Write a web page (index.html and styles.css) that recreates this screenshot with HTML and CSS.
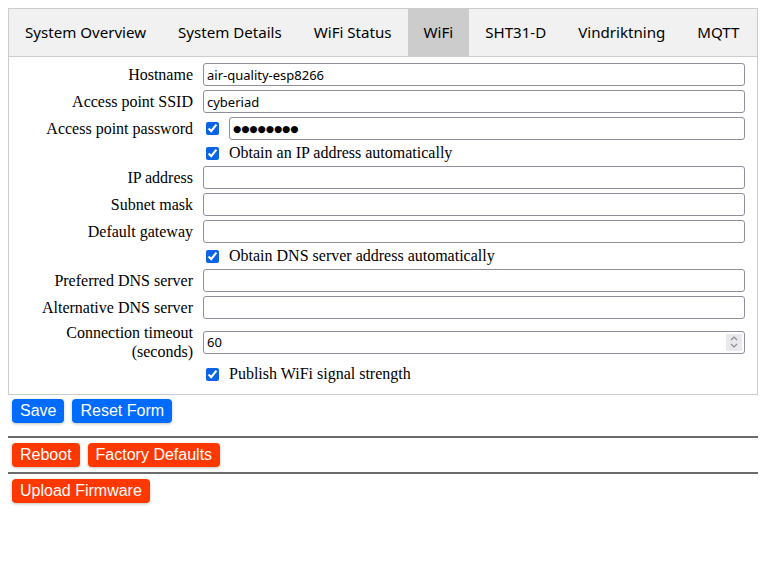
FILE: index.html
```html
<!DOCTYPE html>
<html>
<head>
<meta charset="utf-8">
<link rel="stylesheet" href="styles.css">
</head>
<body>
<div class="tab">
  <button class="tablink">System Overview</button>
  <button class="tablink">System Details</button>
  <button class="tablink">WiFi Status</button>
  <button class="tablink active">WiFi</button>
  <button class="tablink">SHT31-D</button>
  <button class="tablink">Vindriktning</button>
  <button class="tablink">MQTT</button>
</div>
<div class="tabcontent">
  <form class="grid">
    <label class="lbl">Hostname</label>
    <input class="txt" type="text" value="air-quality-esp8266">

    <label class="lbl">Access point SSID</label>
    <input class="txt" type="text" value="cyberiad">

    <label class="lbl">Access point password</label>
    <div class="pwrow">
      <input class="cb" type="checkbox" checked>
      <input class="txt pw" type="text" value="●●●●●●●●">
    </div>

    <span></span>
    <label class="cbrow"><input class="cb" type="checkbox" checked>Obtain an IP address automatically</label>

    <label class="lbl">IP address</label>
    <input class="txt" type="text">

    <label class="lbl">Subnet mask</label>
    <input class="txt" type="text">

    <label class="lbl">Default gateway</label>
    <input class="txt" type="text">

    <span></span>
    <label class="cbrow"><input class="cb" type="checkbox" checked>Obtain DNS server address automatically</label>

    <label class="lbl">Preferred DNS server</label>
    <input class="txt" type="text">

    <label class="lbl">Alternative DNS server</label>
    <input class="txt" type="text">

    <label class="lbl two">Connection timeout<br>(seconds)</label>
    <div class="numwrap">
      <input class="txt num" type="text" value="60">
      <span class="spin"><svg width="10" height="16" viewBox="0 0 10 16"><path d="M2 6 L5 3 L8 6" fill="none" stroke="#8a8a96" stroke-width="1.2"/><path d="M2 10 L5 13 L8 10" fill="none" stroke="#8a8a96" stroke-width="1.2"/></svg></span>
    </div>

    <span></span>
    <label class="cbrow"><input class="cb" type="checkbox" checked>Publish WiFi signal strength</label>
  </form>
</div>
<div class="btnrow first">
  <button class="btn blue">Save</button>
  <button class="btn blue">Reset Form</button>
</div>
<hr class="sep">
<div class="btnrow">
  <button class="btn red">Reboot</button>
  <button class="btn red">Factory Defaults</button>
</div>
<hr class="sep">
<div class="btnrow">
  <button class="btn red">Upload Firmware</button>
</div>
</body>
</html>
```
FILE: styles.css
```css
body {
  margin: 8px;
  font-family: "Liberation Serif", "Times New Roman", serif;
  font-size: 16px;
  background: #fff;
  color: #000;
}
.tab {
  display: flex;
  border: 1px solid #ccc;
  background: #f1f1f1;
}
.tablink {
  flex: none;
  white-space: nowrap;
  border: none;
  background: transparent;
  padding: 14px 16px;
  font-family: "Noto Sans", sans-serif;
  font-size: 15.1px;
  line-height: 19px;
  color: #000;
  margin: 0;
}
.tablink.active {
  background: #ccc;
}
.tabcontent {
  border: 1px solid #ccc;
  border-top: none;
  padding: 6px 12px 11px;
}
.grid {
  display: grid;
  grid-template-columns: 172px 1fr;
  column-gap: 10px;
  row-gap: 4px;
  align-items: center;
  margin: 0;
}
.lbl {
  text-align: right;
  line-height: 18px;
}
.lbl.two {
  line-height: 19px;
}
.txt {
  box-sizing: border-box;
  width: 100%;
  height: 23px;
  margin: 0;
  border: 1px solid #8f8f9d;
  border-radius: 3px;
  padding: 1px 3px;
  font-family: "Noto Sans", sans-serif;
  font-size: 13px;
  color: #000;
  background: #fff;
}
.pwrow {
  display: flex;
  align-items: center;
}
.pw {
  flex: 1;
  margin-left: 10px;
  font-family: "DejaVu Sans", sans-serif;
  font-size: 9.4px;
  letter-spacing: 0;
}
.cb {
  width: 13px;
  height: 13px;
  margin: 0 0 0 3px;
  accent-color: #0b63e5;
}
.cbrow {
  display: flex;
  align-items: center;
  height: 18px;
  gap: 10px;
}
.numwrap {
  position: relative;
}
.spin {
  position: absolute;
  right: 3px;
  top: 3px;
  width: 16px;
  height: 17px;
  background: #e9e9ed;
  display: flex;
  align-items: center;
  justify-content: center;
}
.btnrow {
  display: flex;
}
.btnrow.first {
  margin-bottom: 9px;
}
.btn {
  margin: 4px;
  padding: 0 8px;
  height: 24px;
  border: none;
  border-radius: 4px;
  font-family: "Liberation Sans", Arial, sans-serif;
  font-size: 16px;
  color: #fff;
  box-shadow: 0 1px 3px rgba(0, 0, 0, 0.25);
}
.blue {
  background: #006cff;
}
.red {
  background: #ff3800;
}
.sep {
  margin: 1px 0;
  border: none;
  border-top: 2px solid #6b6b6b;
  height: 0;
}
```
